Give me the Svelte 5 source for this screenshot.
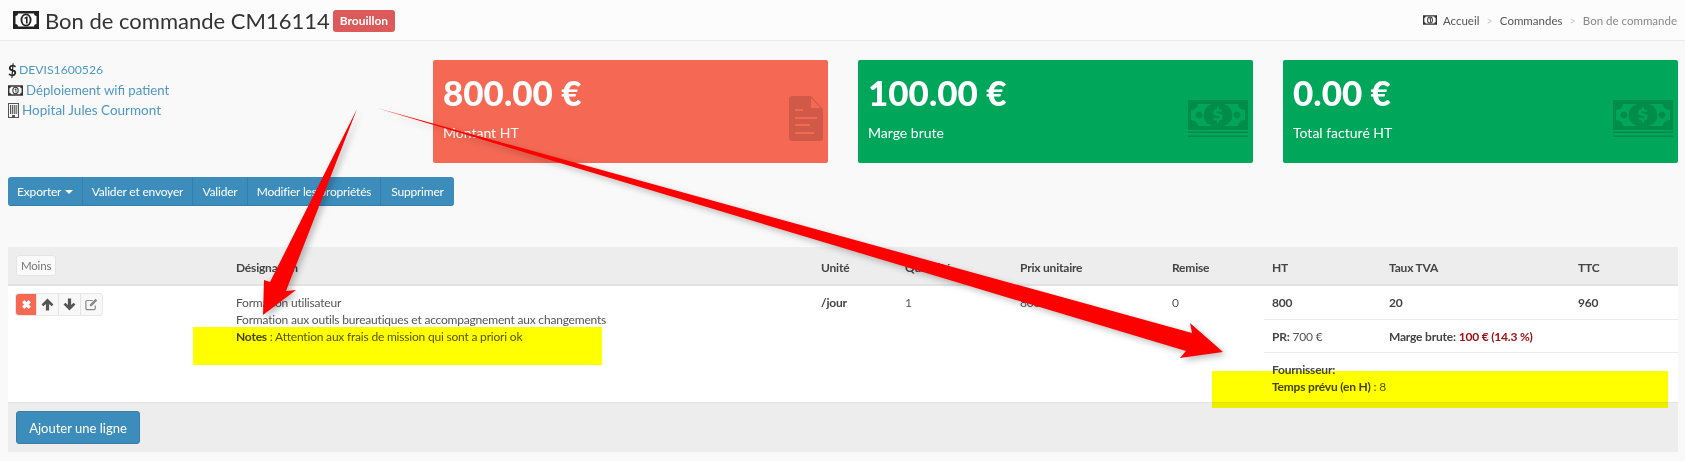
<script>
  // Bon de commande - fiche brouillon
  const cards = [
    { value: '800.00 €', label: 'Montant HT', tone: 'red', icon: 'file' },
    { value: '100.00 €', label: 'Marge brute', tone: 'green', icon: 'cash' },
    { value: '0.00 €', label: 'Total facturé HT', tone: 'green', icon: 'cash' }
  ];
  const actions = ['Valider et envoyer', 'Valider', 'Modifier les propriétés', 'Supprimer'];
</script>

{#snippet money(cls)}
  <svg class={cls} viewBox="0 0 26 18">
    <path fill-rule="evenodd" d="M0 0h26v18H0zM5 2.500c0 1.500-1 2.500-2.500 2.500v8c1.500 0 2.500 1 2.500 2.500h16c0-1.500 1-2.500 2.500-2.500V5C22 5 21 4 21 2.500z" />
    <ellipse cx="13" cy="9" rx="5.500" ry="6.500" />
    <ellipse cx="13" cy="9" rx="3.700" ry="4.800" fill="#fff" />
    <path d="M11.600 6.500l2-1h1v7h-1.600V7.500l-1.400.5z" />
  </svg>
{/snippet}

<div class="page">
  <header class="topbar">
    <h1>
      {@render money('title-icon')}
      <span>Bon de commande CM16114</span>
      <span class="badge">Brouillon</span>
    </h1>
    <nav class="crumbs">
      {@render money('crumb-icon')}
      <span class="c1">Accueil</span><i>&gt;</i><span class="c1">Commandes</span><i>&gt;</i><span class="c2">Bon de commande</span>
    </nav>
  </header>

  <main>
    <section class="summary">
      <div class="refs">
        <div class="ref"><b>$</b><span class="link devis">DEVIS1600526</span></div>
        <div class="ref">{@render money('ref-icon')}<span class="link">Déploiement wifi patient</span></div>
        <div class="ref">
          <svg class="bld" viewBox="0 0 11 15">
            <path fill-rule="evenodd" d="M0 0h11v15H0zM1 1v13h3v-2h3v2h3V1z" />
            <path d="M2 2h1.200v9H2zM4.100 2h1.200v9H4.100zM6.200 2h1.200v9H6.200zM8.300 2h.9v9h-.9z" />
          </svg>
          <span class="link hopital">Hopital Jules Courmont</span>
        </div>
      </div>
      <div class="cards">
        {#each cards as card}
          <div class="card {card.tone}">
            <div class="value">{card.value}</div>
            <div class="label">{card.label}</div>
            {#if card.icon === 'file'}
              <svg class="card-icon file" viewBox="0 0 34 45">
                <path fill-rule="evenodd" d="M3 0h19l12 13v29a3 3 0 0 1-3 3H3a3 3 0 0 1-3-3V3a3 3 0 0 1 3-3zM22 2v10h10zM6 13v2h8v-2zM6 21v2h22v-2zM6 28v2h15v-2zM6 36v2h19v-2z" />
              </svg>
            {:else}
              <svg class="card-icon cash" viewBox="0 0 60 37">
                <path fill-rule="evenodd" d="M0 0h60v30H0zM10 4c0 3-3 6-7 6v10c4 0 7 3 7 6h14a14 12 0 0 1 0-22zM36 4a14 12 0 0 1 0 22h14c0-3 3-6 7-6V10c-4 0-7-3-7-6zM11 11.500a3.500 3.500 0 1 0 .01 0zM49 11.500a3.500 3.500 0 1 0 .01 0zM29 7v1.700c-2.500.5-3.700 2-3.700 3.800 0 4.200 6.500 2.700 6.500 4.700 0 1.500-3.500 1.500-5.500 0l-1 2.100c1 .7 2.200 1.100 3.700 1.300V23h2v-2.400c2.500-.5 3.700-2 3.700-3.700 0-4.200-6.500-2.900-6.500-4.700 0-1.300 3-1.300 5 0l1-2.100c-1-.6-2.200-1-3.200-1.200V7z" />
                <path d="M0 31.500h60V33H0zM0 35.500h60V37H0z" />
              </svg>
            {/if}
          </div>
        {/each}
      </div>
    </section>

    <div class="btn-group">
      <button>Exporter <span class="caret"></span></button>
      {#each actions as action}
        <button>{action}</button>
      {/each}
    </div>

    <div class="lines">
      <table>
        <colgroup>
          <col style="width:220px" /><col style="width:585px" /><col style="width:84px" /><col style="width:115px" />
          <col style="width:152px" /><col style="width:100px" /><col style="width:117px" /><col style="width:189px" /><col />
        </colgroup>
        <thead>
          <tr>
            <th class="first"><span class="moins">Moins</span></th>
            <th>Désignation</th>
            <th>Unité</th>
            <th>Quantité</th>
            <th>Prix unitaire</th>
            <th>Remise</th>
            <th>HT</th>
            <th>Taux TVA</th>
            <th>TTC</th>
          </tr>
        </thead>
        <tbody>
          <tr>
            <td rowspan="3">
              <div class="tools">
                <span class="tool del">
                  <svg viewBox="0 0 12 12"><path d="M3 3l6 6M9 3l-6 6" stroke="#fff" stroke-width="3" /></svg>
                </span>
                <span class="tool">
                  <svg viewBox="0 0 12 12"><path d="M6 .5l5.500 5.500-1.700 1.700L7.500 5.500V11.500h-3V5.500L2.200 7.700.5 6z" /></svg>
                </span>
                <span class="tool">
                  <svg viewBox="0 0 12 12"><path d="M6 11.500L.5 6l1.700-1.700 2.300 2.200V.5h3v6l2.300-2.200L11.500 6z" /></svg>
                </span>
                <span class="tool">
                  <svg viewBox="0 0 12 12"><path d="M9.500 7v2.500a1.200 1.200 0 0 1-1.200 1.200H2a1.200 1.200 0 0 1-1.200-1.200V3.500A1.200 1.200 0 0 1 2 2.300h5" fill="none" stroke="#888" stroke-width="1.100" /><path d="M4.500 6L9.700.8l1.600 1.600-5.200 5.200H4.500z" fill="#888" /></svg>
                </span>
              </div>
            </td>
            <td rowspan="3" class="desc">
              Formation utilisateur<br />
              Formation aux outils bureautiques et accompagnement aux changements<br />
              <b>Notes</b> : Attention aux frais de mission qui sont a priori ok
            </td>
            <td rowspan="3"><b>/jour</b></td>
            <td rowspan="3">1</td>
            <td rowspan="3">800</td>
            <td rowspan="3">0</td>
            <td><b>800</b></td>
            <td><b>20</b></td>
            <td><b>960</b></td>
          </tr>
          <tr class="sep">
            <td><b>PR:</b> 700 €</td>
            <td colspan="2"><b>Marge brute:</b> <b class="margin">100 € (14.3 %)</b></td>
          </tr>
          <tr class="sep">
            <td colspan="3"><b>Fournisseur:</b><br /><b>Temps prévu (en H)</b> : 8</td>
          </tr>
        </tbody>
      </table>
      <div class="foot"><button class="add">Ajouter une ligne</button></div>
    </div>
  </main>

  <!-- annotations de la capture -->
  <div class="mark m1"></div>
  <div class="mark m2"></div>
  <svg class="arrows" viewBox="0 0 1685 461">
    <polygon points="357,109 286,291 296,290 263,315 264,280 270,282" />
    <polygon points="377,108 1192,333 1190,323 1223,352 1180,358 1186,351" />
  </svg>
</div>

<style>
  :global(body) {
    margin: 0;
    background: #f9f9f9;
  }

  .page {
    position: relative;
    height: 461px;
    overflow: hidden;
    font-family: Lato, "Noto Sans", sans-serif;
    font-size: 12px;
    letter-spacing: -0.2px;
    color: #444;
  }

  .topbar {
    display: flex;
    justify-content: space-between;
    align-items: center;
    height: 40px;
    padding: 0 8px 0 13px;
    background: #fcfcfc;
    border-bottom: 1px solid #ececec;
  }

  h1 {
    display: flex;
    align-items: center;
    gap: 6px;
    margin: 0;
    font-size: 22px;
    font-weight: 400;
    letter-spacing: 0;
    color: #333;
  }

  .title-icon {
    width: 26px;
    height: 18px;
    fill: #222;
  }

  .badge {
    margin: 2px 0 0 -3px;
    padding: 3px 7px;
    background: #dc5a5a;
    color: #fff;
    font-size: 12px;
    line-height: 16px;
    font-weight: 700;
    border-radius: 3px;
  }

  .crumbs {
    display: flex;
    align-items: center;
    font-size: 11.500px;
    letter-spacing: 0;
    color: #555;
  }

  .crumbs i {
    margin: 0 7px;
    font-style: normal;
    color: #ccc;
    font-size: 11px;
  }

  .crumbs .c2 {
    color: #888;
  }

  .crumb-icon {
    width: 14px;
    height: 10px;
    margin-right: 6px;
    fill: #333;
  }

  main {
    padding: 19px 7px 0 8px;
  }

  .summary {
    display: flex;
  }

  .refs {
    flex: 0 0 425px;
    font-size: 13.200px;
    letter-spacing: 0;
    line-height: 20px;
  }

  .ref {
    display: flex;
    align-items: center;
    gap: 3px;
  }

  .ref b {
    width: 8px;
    color: #222;
    font-size: 15px;
  }

  .link {
    color: #4f97c4;
  }

  .devis {
    font-size: 12.200px;
  }

  .hopital {
    font-size: 13.500px;
  }

  .ref-icon {
    width: 15px;
    height: 11px;
    fill: #333;
  }

  .bld {
    width: 11px;
    height: 15px;
    fill: #555;
  }

  .cards {
    flex: 1;
    display: flex;
    gap: 30px;
  }

  .card {
    position: relative;
    flex: 1;
    height: 103px;
    padding: 10px;
    box-sizing: border-box;
    color: #fff;
    border-radius: 2px;
  }

  .red {
    background: #f56954;
  }

  .green {
    background: #00a65a;
  }

  .value {
    font-size: 35px;
    font-weight: 900;
    letter-spacing: 0;
    line-height: 44px;
  }

  .label {
    margin-top: 9px;
    font-size: 14px;
    letter-spacing: 0;
    line-height: 20px;
  }

  .card-icon {
    position: absolute;
    fill: rgba(0, 0, 0, 0.15);
  }

  .file {
    right: 5px;
    top: 36px;
    width: 34px;
    height: 45px;
  }

  .cash {
    right: 5px;
    top: 40px;
    width: 60px;
    height: 37px;
  }

  .btn-group {
    display: grid;
    grid-template-columns: 74px 110px 55px 133px 74px;
    width: 446px;
    height: 29px;
    margin-top: 14px;
    background: #3c8dbc;
    border-radius: 3px;
    border-bottom: 1px solid #367fa9;
    box-sizing: border-box;
  }

  .btn-group button {
    padding: 0;
    background: none;
    border: 0;
    border-left: 1px solid #367fa9;
    color: #fff;
    font: inherit;
    letter-spacing: -0.2px;
    white-space: nowrap;
  }

  .btn-group button:first-child {
    border-left: 0;
  }

  .caret {
    display: inline-block;
    margin-left: 1px;
    vertical-align: middle;
    border: 4px solid transparent;
    border-top-color: #fff;
    border-bottom: 0;
  }

  .lines {
    margin-top: 41px;
    background: #ededed;
  }

  table {
    width: 100%;
    table-layout: fixed;
    border-collapse: collapse;
    background: #fff;
  }

  thead tr {
    height: 38px;
    background: #ededed;
    border-bottom: 2px solid #e2e2e2;
  }

  th {
    padding: 4px 8px 0;
    text-align: left;
    font-weight: 700;
    color: #444;
  }

  th.first {
    padding-top: 0;
  }

  td {
    padding: 8px 8px 8px;
    line-height: 17px;
    vertical-align: top;
    color: #555;
  }

  .sep td {
    padding-bottom: 7px;
    border-top: 1px solid #ececec;
  }

  td b {
    color: #444;
  }

  .moins {
    display: inline-block;
    padding: 0 4px;
    line-height: 19px;
    background: #fafafa;
    border: 1px solid #e4e4e4;
    border-radius: 3px;
    font-weight: 400;
    color: #777;
    font-size: 11.500px;
  }

  .tools {
    display: flex;
    width: 86px;
    height: 21px;
    border-radius: 3px;
    box-shadow: 0 0 0 1px #e8e8e8;
    background: #f8f8f8;
  }

  .tool {
    flex: 1;
    display: flex;
    align-items: center;
    justify-content: center;
    border-left: 1px solid #e4e4e4;
  }

  .tool svg {
    width: 13px;
    height: 13px;
    fill: #555;
  }

  .del {
    flex: 0 0 20px;
    background: #f56954;
    border: 0;
    border-radius: 3px 0 0 3px;
  }

  .margin {
    color: #a01212;
  }

  .foot {
    height: 50px;
    padding: 8px;
    box-sizing: border-box;
    border-top: 1px solid #e2e2e2;
  }

  .add {
    width: 124px;
    height: 33px;
    background: #3c8dbc;
    border: 1px solid #367fa9;
    border-radius: 3px;
    color: #fff;
    font: inherit;
    font-size: 13px;
    letter-spacing: 0;
  }

  .mark {
    position: absolute;
    background: #ffff00;
    mix-blend-mode: multiply;
  }

  .m1 {
    left: 193px;
    top: 327px;
    width: 409px;
    height: 38px;
  }

  .m2 {
    left: 1212px;
    top: 371px;
    width: 456px;
    height: 37px;
  }

  .arrows {
    position: absolute;
    inset: 0;
    width: 1685px;
    height: 461px;
    fill: #ff0000;
    filter: drop-shadow(3px 3px 3px rgba(0, 0, 0, 0.25));
  }
</style>
